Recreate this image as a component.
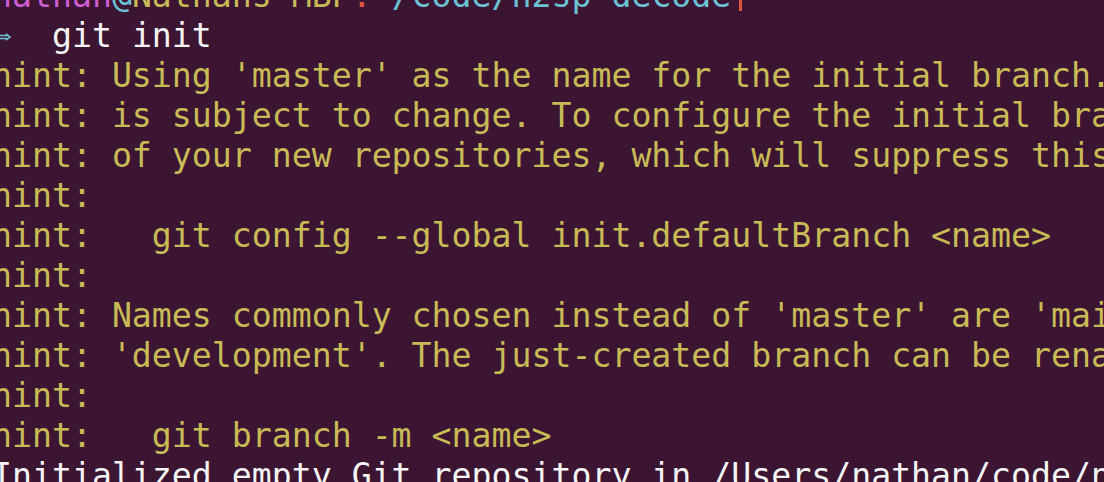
import React from "react";

const hints = [
  "Using 'master' as the name for the initial branch. This default branch name",
  "is subject to change. To configure the initial branch name to use in all",
  "of your new repositories, which will suppress this warning, call:",
  "",
  "  git config --global init.defaultBranch <name>",
  "",
  "Names commonly chosen instead of 'master' are 'main', 'trunk' and",
  "'development'. The just-created branch can be renamed via this command:",
  "",
  "  git branch -m <name>",
];

export default function App() {
  return (
    <div className="w-[1104px] h-[482px] overflow-hidden bg-[#3c1533]">
      <div
        className="mt-[-24px] ml-[-8px] whitespace-pre text-[33.2px] leading-[40px] text-[#c8bb55]"
        style={{ fontFamily: '"DejaVu Sans Mono", monospace' }}
      >
        <div>
          <span className="text-[#cd5ed2]">nathan</span>
          <span className="text-[#6cc3d5]">@</span>
          <span className="text-[#c8bb55]">Nathans-MBP</span>
          <span className="text-[#e0553f]">:</span>
          <span className="text-[#6cc3d5]">~/code/n2sp-decode</span>
          <span className="inline-block w-[3px] h-[30px] ml-[8px] align-[-4px] bg-[#e0553f]"></span>
        </div>
        <div className="text-[#f4f4f4]">
          <span className="inline-block w-[20px] h-[40px] align-top relative">
            <svg
              className="absolute left-[8px] top-[17px]"
              width="11"
              height="8"
              viewBox="0 0 11 8"
              fill="none"
              stroke="#6cc3d5"
              strokeWidth="1.6"
            >
              <path d="M0 2.5H8M0 5.5H8M6 0.8L10 4L6 7.2" />
            </svg>
          </span>
          {"  git init"}
        </div>
        {hints.map((h, i) => (
          <div key={i}>{"hint:" + (h ? " " + h : "")}</div>
        ))}
        <div className="text-[#f4f4f4]">
          Initialized empty Git repository in /Users/nathan/code/n2sp-decode/.git/
        </div>
      </div>
    </div>
  );
}
